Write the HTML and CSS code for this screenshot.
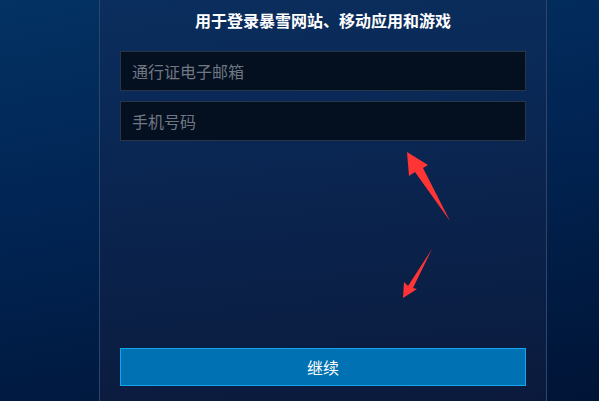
FILE: index.html
```html
<!DOCTYPE html>
<html lang="zh-CN">
    <head>
        <meta charset="utf-8"/>
        <title>登录</title>
        <link rel="stylesheet" href="styles.css">
    </head>
    <body>
        <div class="panel">
            <h3 class="title">用于登录暴雪网站、移动应用和游戏</h3>
            <input type="text" class="field" placeholder="通行证电子邮箱">
            <input type="text" class="field" placeholder="手机号码">
            <div class="spacer"></div>
            <a class="btn">继续</a>
        </div>
        <!--annotation arrows-->
        <svg class="marks" width="599" height="401" viewBox="0 0 599 401">
            <polygon points="407,152 428,165 423,168 450,221 415,172 409,176" fill="#ff3535"/>
            <polygon points="432,249 413,288 417,289 403,298 404,282 408,286" fill="#ff3535"/>
        </svg>
    </body>
</html>
```

FILE: styles.css
```css
html,body {
    margin: 0;
    height: 100%;
}

body {
    position: relative;
    overflow: hidden;
    font-family: "Noto Sans CJK SC", "Noto Sans", sans-serif;
    background: linear-gradient(170deg, #033263 0%, #012453 45%, #001436 100%);
}

.panel {
    box-sizing: border-box;
    width: 448px;
    height: 401px;
    margin-left: 99px;
    padding: 8px 20px 0;
    display: flex;
    flex-direction: column;
    border-left: 1px solid #2c4568;
    border-right: 1px solid #2c4568;
    background: linear-gradient(175deg, #0a2e5e 0%, #0a2550 45%, #0b1a3c 100%);
}

.title {
    margin: 0 0 19px;
    font-size: 16px;
    line-height: 24px;
    font-weight: 700;
    text-align: center;
    color: #fff;
}

.field {
    box-sizing: border-box;
    width: 406px;
    height: 40px;
    margin: 0 0 10px;
    padding: 0 11px;
    border: 1px solid #283548;
    background: #040f20;
    font-family: inherit;
    font-size: 16px;
    color: #ccc;
    outline: none;
}

.field::placeholder {
    color: #6f7782;
}

.spacer {
    height: 197px;
}

.btn {
    box-sizing: border-box;
    display: block;
    width: 406px;
    height: 38px;
    line-height: 36px;
    border: 1px solid #13a6f0;
    background: #0071b3;
    font-size: 16px;
    text-align: center;
    color: #fff;
    cursor: pointer;
    user-select: none;
}

.marks {
    position: absolute;
    left: 0;
    top: 0;
    pointer-events: none;
}
```
